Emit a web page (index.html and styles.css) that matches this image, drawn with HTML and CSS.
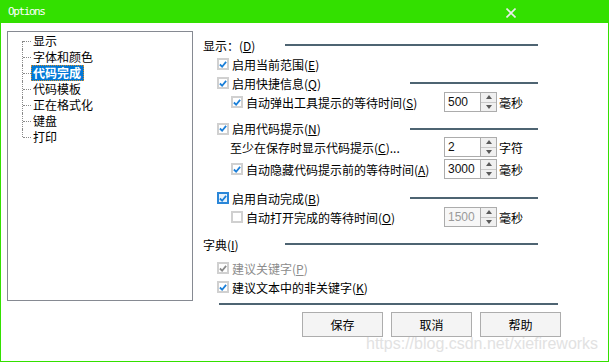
FILE: index.html
```html
<!DOCTYPE html>
<html lang="zh">
<head>
<meta charset="utf-8">
<title>Options</title>
<link rel="stylesheet" href="styles.css">
</head>
<body>
<div class="win">
  <div class="titlebar">
    <span class="title">Options</span>
    <svg class="close" width="10" height="10" viewBox="0 0 10 10"><path d="M0.5 0.5 L9.5 9.5 M9.5 0.5 L0.5 9.5"/></svg>
  </div>
  <div class="body">
    <div class="tree">
      <ul>
        <li><span class="lbl">显示</span></li>
        <li><span class="lbl">字体和颜色</span></li>
        <li><span class="lbl sel">代码完成</span></li>
        <li><span class="lbl">代码模板</span></li>
        <li><span class="lbl">正在格式化</span></li>
        <li><span class="lbl">键盘</span></li>
        <li><span class="lbl">打印</span></li>
      </ul>
    </div>
    <div class="panel">
      <div class="groups">
        <div class="row head"><span>显示：(<u>D</u>)</span><i class="line long"></i></div>
        <div class="row l1 h18 mt2"><span class="cb on"><svg viewBox="0 0 9 9"><path d="M1 4.5 L3.5 7 L8 1.5"/></svg></span><span>启用当前范围(<u>E</u>)</span></div>
        <div class="row l1 h18 mt1"><span class="cb on"><svg viewBox="0 0 9 9"><path d="M1 4.5 L3.5 7 L8 1.5"/></svg></span><span>启用快捷信息(<u>Q</u>)</span><i class="line short"></i></div>
        <div class="row l2 h20">
          <span class="cb on"><svg viewBox="0 0 9 9"><path d="M1 4.5 L3.5 7 L8 1.5"/></svg></span><span class="grow">自动弹出工具提示的等待时间(<u>S</u>)</span>
          <span class="spin"><span class="val">500</span><span class="btns"><b class="up"></b><b class="dn"></b></span></span><span class="unit">毫秒</span>
        </div>
        <div class="row l1 h17 mt8"><span class="cb on"><svg viewBox="0 0 9 9"><path d="M1 4.5 L3.5 7 L8 1.5"/></svg></span><span>启用代码提示(<u>N</u>)</span><i class="line short"></i></div>
        <div class="row l2t h20">
          <span class="grow">至少在保存时显示代码提示(<u>C</u>)...</span>
          <span class="spin"><span class="val">2</span><span class="btns"><b class="up"></b><b class="dn"></b></span></span><span class="unit">字符</span>
        </div>
        <div class="row l2 h20 mt2">
          <span class="cb on"><svg viewBox="0 0 9 9"><path d="M1 4.5 L3.5 7 L8 1.5"/></svg></span><span class="grow">自动隐藏代码提示前的等待时间(<u>A</u>)</span>
          <span class="spin"><span class="val">3000</span><span class="btns"><b class="up"></b><b class="dn"></b></span></span><span class="unit">毫秒</span>
        </div>
        <div class="row l1 h18 mt10"><span class="cb on focus"><svg viewBox="0 0 9 9"><path d="M1 4.5 L3.5 7 L8 1.5"/></svg></span><span>启用自动完成(<u>B</u>)</span><i class="line short"></i></div>
        <div class="row l2 h20">
          <span class="cb"></span><span class="grow">自动打开完成的等待时间(<u>O</u>)</span>
          <span class="spin off"><span class="val">1500</span><span class="btns"><b class="up"></b><b class="dn"></b></span></span><span class="unit">毫秒</span>
        </div>
        <div class="row head mt9"><span>字典(<u>I</u>)</span><i class="line long"></i></div>
        <div class="row l1 h18 mt7 dis"><span class="cb on"><svg viewBox="0 0 9 9"><path d="M1 4.5 L3.5 7 L8 1.5"/></svg></span><span>建议关键字(<u>P</u>)</span></div>
        <div class="row l1 h18 mt1"><span class="cb on"><svg viewBox="0 0 9 9"><path d="M1 4.5 L3.5 7 L8 1.5"/></svg></span><span>建议文本中的非关键字(<u>K</u>)</span></div>
      </div>
      <div class="sep"></div>
      <div class="buttons">
        <button class="btn">保存</button>
        <button class="btn">取消</button>
        <button class="btn">帮助</button>
      </div>
    </div>
  </div>
  <div class="watermark">https://blog.csdn.net/xiefireworks</div>
</div>
</body>
</html>
```
FILE: styles.css
```css
* { box-sizing: border-box; }
html, body { margin: 0; padding: 0; background: #fff; }
body { font-family: "Noto Sans CJK SC", "Liberation Sans", sans-serif; font-size: 12px; color: #000; }

.win {
  position: relative;
  width: 609px;
  height: 362px;
  border: 1px solid #33e000;
  border-top: none;
  background: #fff;
  overflow: hidden;
}

.titlebar {
  height: 23px;
  margin: 0 -1px;
  background: #33e000;
  display: flex;
  align-items: center;
  justify-content: space-between;
  padding: 0 93px 0 8px;
}
.title {
  font-family: "DejaVu Sans Mono", monospace;
  font-size: 11px;
  letter-spacing: -1.4px;
  color: #fff;
  line-height: 12px;
}
.close { stroke: #ececec; stroke-width: 1.6; fill: none; margin-top: 2px; }

.body { display: flex; align-items: flex-start; }

.tree {
  margin: 8px 0 0 6px;
  width: 186px;
  height: 270px;
  border: 1px solid #868a92;
  padding-top: 1px;
}
.tree ul { list-style: none; margin: 0 0 0 14px; padding: 0; }
.tree li {
  position: relative;
  height: 16px;
  line-height: 16px;
  padding-left: 9px;
}
.tree li::before {
  content: "";
  position: absolute;
  left: 0; top: 0; bottom: 0;
  border-left: 1px dotted #8a8a8a;
}
.tree li:first-child::before { top: 8px; }
.tree li:last-child::before { bottom: 8px; }
.tree li::after {
  content: "";
  position: absolute;
  left: 1px; top: 8px;
  width: 8px;
  border-top: 1px dotted #8a8a8a;
}
.lbl { display: inline-block; padding: 0 2px; height: 16px; line-height: 16px; }
.lbl.sel {
  background: #0078d7;
  color: #fff;
  font-weight: bold;
  padding: 0 3px 0 2px;
  outline: 1px dotted #d08a2a;
  outline-offset: -1px;
}

.panel { width: 368px; padding-top: 14px; }
.groups { padding: 0 23px 0 10px; }

.row { display: flex; align-items: center; white-space: nowrap; }
.row.head { height: 16px; }
.h17 { height: 17px; }
.h18 { height: 18px; }
.h20 { height: 20px; }
.mt1 { margin-top: 1px; }
.mt2 { margin-top: 2px; }
.mt7 { margin-top: 7px; }
.mt8 { margin-top: 8px; }
.mt9 { margin-top: 9px; }
.mt10 { margin-top: 10px; }
.l1 { padding-left: 14px; }
.l2 { padding-left: 28px; }
.l2t { padding-left: 27px; }
.grow { flex: 1; }
u { text-decoration: underline; text-underline-offset: 1px; }

.line { display: block; height: 2px; background: #4e6472; margin-left: auto; }
.line.long { width: 253px; }
.line.short { width: 128px; }

.cb {
  width: 12px; height: 12px;
  border: 2px solid #d0d0d0;
  background: #fff;
  margin-right: 3px;
  display: inline-flex;
  align-items: center;
  justify-content: center;
  flex: none;
}
.cb svg { width: 9px; height: 9px; fill: none; stroke: #1b7fd8; stroke-width: 2; }
.cb.focus { border-color: #2a86d8; background: #e8f2fb; }
.dis { color: #8c8c8c; }
.dis .cb svg { stroke: #8a8a8a; }

.spin {
  display: flex;
  width: 53px;
  height: 20px;
  border: 1px solid #acacac;
  background: #fff;
  flex: none;
}
.spin .val {
  flex: 1;
  padding-left: 3px;
  font-family: "Liberation Sans", sans-serif;
  font-size: 12px;
  line-height: 18px;
  color: #101010;
}
.spin.off .val { color: #9a9a9a; background: #f7f7f7; }
.spin .btns {
  width: 16px;
  border-left: 1px solid #acacac;
  display: flex;
  flex-direction: column;
  background: #f0f0f0;
}
.spin .btns b {
  flex: 1;
  display: flex;
  align-items: center;
  justify-content: center;
}
.spin .btns b.up { border-bottom: 1px solid #c8c8c8; }
.spin .btns b::before {
  content: "";
  border-left: 3px solid transparent;
  border-right: 3px solid transparent;
}
.spin .btns b.up::before { border-bottom: 4px solid #5a5a5a; }
.spin .btns b.dn::before { border-top: 4px solid #5a5a5a; }
.unit { width: 39px; margin-left: 2px; flex: none; }

.sep { height: 2px; background: #4e6472; margin: 7px 3px 0 26px; }

.buttons { display: flex; justify-content: flex-end; gap: 8px; margin-top: 7px; }
.btn {
  width: 81px;
  height: 25px;
  border: 1px solid #adadad;
  background: #f4f4f4;
  font-family: "Noto Sans CJK SC", sans-serif;
  font-size: 12px;
  color: #000;
  padding: 0;
}

.watermark {
  position: absolute;
  left: 365px;
  top: 335px;
  font-family: "Liberation Sans", Arial, sans-serif;
  font-size: 16px;
  line-height: 18px;
  color: #e2e2e2;
  white-space: nowrap;
}
```
